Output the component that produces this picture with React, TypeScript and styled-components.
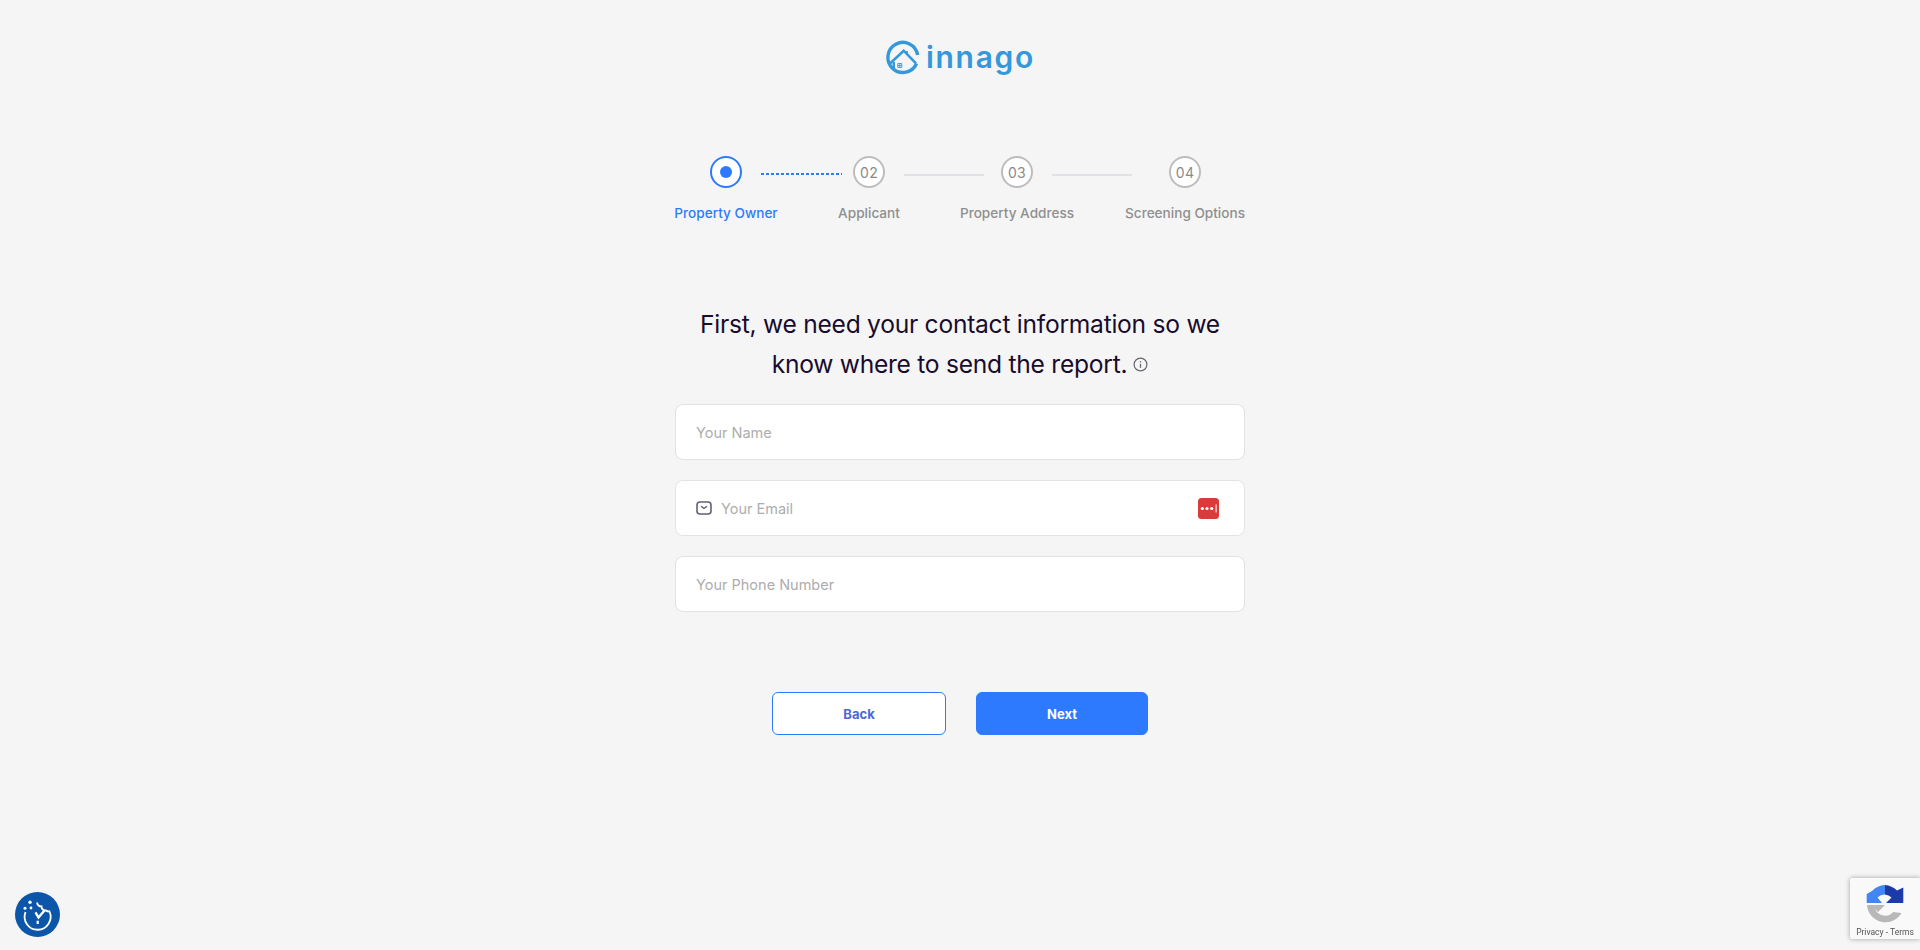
import React from "react";
import styled, { createGlobalStyle } from "styled-components";

const Global = createGlobalStyle`
  html, body { margin: 0; padding: 0; background: #f5f5f5; }
  body { font-family: "Inter", "Liberation Sans", sans-serif; }
  * { box-sizing: border-box; }
  input { font-family: inherit; }
`;

const Page = styled.main`
  min-height: 950px;
  display: flex;
  flex-direction: column;
  align-items: center;
  padding-top: 38px;
`;

const Logo = styled.div`
  display: flex;
  align-items: flex-start;
  gap: 5px;
  width: 150px;
  height: 38px;
  color: #3498db;
`;

const LogoWord = styled.span`
  font-family: "Inter", sans-serif;
  font-size: 30px;
  font-weight: 600;
  line-height: 38px;
  letter-spacing: 1.7px;
`;

const Steps = styled.ol`
  list-style: none;
  margin: 80px 0 0;
  padding: 0;
  width: 570px;
  display: flex;
  justify-content: space-between;
`;

const Step = styled.li<{ $w: number }>`
  position: relative;
  width: ${(p) => p.$w}px;
  display: flex;
  flex-direction: column;
  align-items: center;
`;

const Dot = styled.div<{ $active?: boolean }>`
  width: 32px;
  height: 32px;
  border-radius: 50%;
  display: flex;
  align-items: center;
  justify-content: center;
  background: #fff;
  border: 2px solid ${(p) => (p.$active ? "#2e7aff" : "#bdbdbd")};
  color: #8a8a8a;
  font-size: 14px;
  font-weight: 400;
  letter-spacing: 0.3px;
  &::after {
    content: "";
    display: ${(p) => (p.$active ? "block" : "none")};
    width: 12px;
    height: 12px;
    border-radius: 50%;
    background: #2e7aff;
  }
`;

const Connector = styled.span<{ $dotted?: boolean }>`
  position: absolute;
  top: ${(p) => (p.$dotted ? 17 : 18)}px;
  left: calc(50% + 35px);
  width: ${(p) => (p.$dotted ? 81 : 80)}px;
  height: 2px;
  background: ${(p) =>
    p.$dotted
      ? "repeating-linear-gradient(90deg, #2e7aff 0 3px, transparent 3px 5px)"
      : "#e2e2e6"};
`;

const StepLabel = styled.span<{ $active?: boolean }>`
  margin-top: 15px;
  font-size: 13.6px;
  line-height: 20px;
  font-weight: 500;
  white-space: nowrap;
  color: ${(p) => (p.$active ? "#2e7aff" : "#8f8f8f")};
`;

const Heading = styled.h1`
  margin: 81px 0 0;
  width: 570px;
  text-align: center;
  font-size: 24.6px;
  line-height: 40px;
  font-weight: 400;
  letter-spacing: -0.26px;
  color: #190c2c;
`;

const InfoIcon = styled.svg`
  display: inline-block;
  width: 15px;
  height: 15px;
  margin-left: 6px;
  vertical-align: 1px;
`;

const Form = styled.form`
  margin-top: 20px;
  width: 570px;
  display: flex;
  flex-direction: column;
  gap: 20px;
`;

const Field = styled.label`
  height: 56px;
  display: flex;
  align-items: center;
  gap: 9px;
  padding: 0 25px 0 20px;
  background: #fff;
  border: 1px solid #e3e3e6;
  border-radius: 8px;
`;

const FieldInput = styled.input`
  flex: 1;
  min-width: 0;
  border: 0;
  outline: 0;
  padding: 0;
  background: transparent;
  font-size: 14.5px;
  color: #333;
  &::placeholder {
    color: #adadad;
    opacity: 1;
  }
`;

const Actions = styled.div`
  margin-top: 80px;
  display: flex;
  gap: 30px;
`;

const Button = styled.button<{ $primary?: boolean }>`
  width: ${(p) => (p.$primary ? 172 : 174)}px;
  height: 43px;
  border-radius: 6px;
  border: 1px solid #2e7aff;
  background: ${(p) => (p.$primary ? "#2e7aff" : "#fff")};
  color: ${(p) => (p.$primary ? "#fff" : "#4c68d7")};
  font-family: inherit;
  font-size: 13px;
  font-weight: 700;
`;

const CookieBadge = styled.div`
  position: fixed;
  left: 15px;
  bottom: 13px;
  width: 45px;
  height: 45px;
  border-radius: 50%;
  background: #0b56a8;
  display: flex;
`;

const Recaptcha = styled.div`
  position: fixed;
  right: 0;
  bottom: 11px;
  width: 70px;
  height: 61px;
  background: #f9f9f9;
  border-radius: 2px 0 0 2px;
  box-shadow: 0 0 5px rgba(0, 0, 0, 0.35);
  display: flex;
  flex-direction: column;
  align-items: center;
  padding-top: 7px;
`;

const RecaptchaTerms = styled.span`
  margin-top: 1px;
  font-family: "Roboto", sans-serif;
  font-size: 8.5px;
  line-height: 12px;
  color: #555;
  white-space: nowrap;
`;

const steps = [
  { label: "Property Owner", w: 102 },
  { label: "Applicant", w: 80, n: "02" },
  { label: "Property Address", w: 112, n: "03" },
  { label: "Screening Options", w: 120, n: "04" },
];

export default function App() {
  return (
    <Page>
      <Global />
      <Logo>
        <svg width="36" height="38" viewBox="0 0 36 38" fill="none" stroke="#3498db">
          <g transform="translate(1 0)">
            <path d="M31.700 17A15 15 0 1 0 30.600 25.500" strokeWidth="3.400" />
            <path d="M4.300 25.300 17.700 12.700 30 25.300" strokeWidth="2.600" />
            <path d="M7.800 24v6" strokeWidth="2.400" />
            <path d="M21 13v4" strokeWidth="1.800" />
            <path d="M11.800 25.500h4v4h-4zM13.800 25.500v4M11.800 27.500h4" strokeWidth="0.900" />
          </g>
        </svg>
        <LogoWord>innago</LogoWord>
      </Logo>

      <Steps>
        {steps.map((s, i) => (
          <Step key={s.label} $w={s.w}>
            <Dot $active={i === 0}>{s.n}</Dot>
            {i < 3 && <Connector $dotted={i === 0} />}
            <StepLabel $active={i === 0}>{s.label}</StepLabel>
          </Step>
        ))}
      </Steps>

      <Heading>
        First, we need your contact information so we
        <br />
        know where to send the report.
        <InfoIcon viewBox="0 0 15 15" fill="none" stroke="#66666f">
          <circle cx="7.500" cy="7.500" r="6.400" strokeWidth="1.200" />
          <path d="M7.500 6.800v4" strokeWidth="1.300" />
          <path d="M7.500 4.200v1.300" strokeWidth="1.400" />
        </InfoIcon>
      </Heading>

      <Form>
        <Field>
          <FieldInput placeholder="Your Name" />
        </Field>
        <Field>
          <svg width="16" height="14" viewBox="0 0 16 14" fill="none" stroke="#5f6272">
            <rect x="1" y="1" width="14" height="12" rx="3" strokeWidth="1.600" />
            <path d="M5 5.200 8 7.400l3-2.200" strokeWidth="1.400" />
          </svg>
          <FieldInput placeholder="Your Email" />
          <svg width="21" height="21" viewBox="0 0 21 21">
            <rect width="21" height="21" rx="3.500" fill="#db3a3a" />
            <circle cx="4.300" cy="10.500" r="1.600" fill="#fff" />
            <circle cx="9" cy="10.500" r="1.600" fill="#fff" />
            <circle cx="13.700" cy="10.500" r="1.600" fill="#fff" />
            <rect x="17.600" y="6.500" width="1" height="8" fill="#fff" />
          </svg>
        </Field>
        <Field>
          <FieldInput placeholder="Your Phone Number" />
        </Field>
      </Form>

      <Actions>
        <Button type="button">Back</Button>
        <Button type="button" $primary>
          Next
        </Button>
      </Actions>

      <CookieBadge>
        <svg width="45" height="45" viewBox="0 0 45 45" fill="none" stroke="#fff">
          <path
            d="M22 10.500c.5 2.500 2 4 4.500 4 0 2.500 1.800 4.200 4.500 4 .9.900 2 1 3.500 1A13 13 0 1 1 10.500 20"
            strokeWidth="1.800"
          />
          <path d="m20.500 20.300 3 5.200 6-7" strokeWidth="2.400" />
          <path d="M22.700 28.700V32" strokeWidth="2.200" />
          <circle cx="15" cy="10.300" r="1.700" fill="#fff" stroke="none" />
          <circle cx="10" cy="16.300" r="1.500" fill="#fff" stroke="none" />
          <circle cx="16" cy="16" r="1.400" fill="#fff" stroke="none" />
        </svg>
      </CookieBadge>

      <Recaptcha>
        <svg width="38" height="40" viewBox="0 0 38 40" fill="none">
          <path d="M19 0A19 19 0 0 1 31 5.500L37.300 2.500V18H20L25.500 12.500A10 10 0 0 0 19 9.500Z" fill="#1c3aa9" />
          <path d="M19 0A19 19 0 0 0 6 6L0.700 9V18H16L11.500 12.500A10 10 0 0 1 19 9.500Z" fill="#4285f4" />
          <path d="M1 20H8.500A10.500 10.500 0 0 0 27 27L35.500 28A18.500 18.500 0 0 1 1 20Z" fill="#b8b8b8" />
          <path d="M5 20H19L12 27Z" fill="#b8b8b8" />
        </svg>
        <RecaptchaTerms>Privacy - Terms</RecaptchaTerms>
      </Recaptcha>
    </Page>
  );
}
